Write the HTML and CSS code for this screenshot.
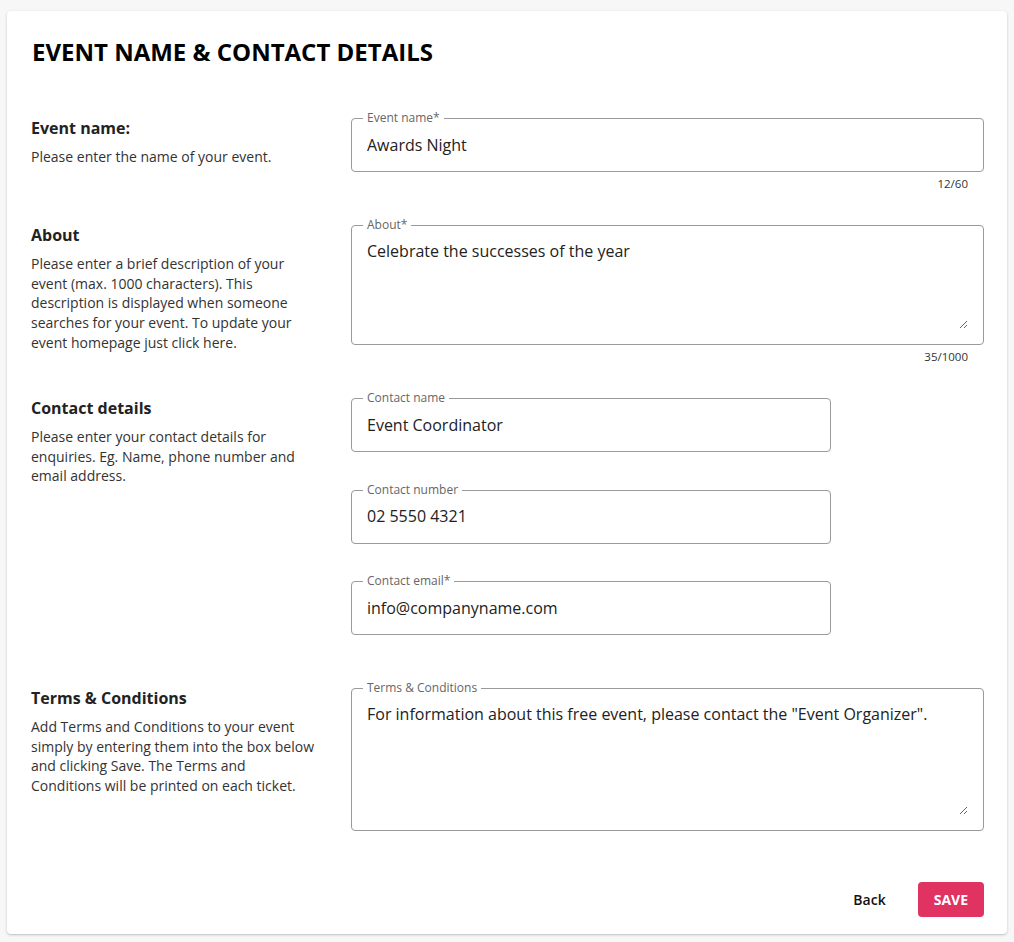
FILE: index.html
```html
<!DOCTYPE html>
<html lang="en">
<head>
<meta charset="utf-8">
<title>Event name &amp; contact details</title>
<link rel="stylesheet" href="styles.css">
</head>
<body>
<main class="card">
  <h1 class="title">EVENT NAME &amp; CONTACT DETAILS</h1>

  <section class="row">
    <div class="info">
      <h2 class="info-title">Event name:</h2>
      <p class="info-text">Please enter the name of your event.</p>
    </div>
    <div class="fields">
      <div class="field-wrap">
        <div class="field">
          <span class="field-label">Event name*</span>
          <input class="field-input" type="text" value="Awards Night">
        </div>
        <div class="helper">12/60</div>
      </div>
    </div>
  </section>

  <section class="row">
    <div class="info">
      <h2 class="info-title">About</h2>
      <p class="info-text">Please enter a brief description of your event (max. 1000 characters). This description is displayed when someone searches for your event. To update your event homepage just click here.</p>
    </div>
    <div class="fields">
      <div class="field-wrap">
        <div class="field field-multi">
          <span class="field-label">About*</span>
          <textarea class="field-area area-about">Celebrate the successes of the year</textarea>
        </div>
        <div class="helper">35/1000</div>
      </div>
    </div>
  </section>

  <section class="row">
    <div class="info">
      <h2 class="info-title">Contact details</h2>
      <p class="info-text">Please enter your contact details for enquiries. Eg. Name, phone number and email address.</p>
    </div>
    <div class="fields fields-narrow">
      <div class="field-wrap">
        <div class="field">
          <span class="field-label">Contact name</span>
          <input class="field-input" type="text" value="Event Coordinator">
        </div>
        <div class="helper"></div>
      </div>
      <div class="field-wrap">
        <div class="field">
          <span class="field-label">Contact number</span>
          <input class="field-input" type="text" value="02 5550 4321">
        </div>
        <div class="helper"></div>
      </div>
      <div class="field-wrap">
        <div class="field">
          <span class="field-label">Contact email*</span>
          <input class="field-input" type="text" value="info@companyname.com">
        </div>
        <div class="helper"></div>
      </div>
    </div>
  </section>

  <section class="row">
    <div class="info">
      <h2 class="info-title">Terms &amp; Conditions</h2>
      <p class="info-text">Add Terms and Conditions to your event simply by entering them into the box below and clicking Save. The Terms and Conditions will be printed on each ticket.</p>
    </div>
    <div class="fields">
      <div class="field-wrap">
        <div class="field field-multi">
          <span class="field-label">Terms &amp; Conditions</span>
          <textarea class="field-area area-terms">For information about this free event, please contact the "Event Organizer".</textarea>
        </div>
        <div class="helper"></div>
      </div>
    </div>
  </section>

  <div class="actions">
    <button class="btn btn-text" type="button">Back</button>
    <button class="btn btn-primary" type="button">SAVE</button>
  </div>
</main>
</body>
</html>
```

FILE: styles.css
```css
* { box-sizing: border-box; }

html, body {
  margin: 0;
  padding: 0;
  background: #f7f7f7;
}

body {
  padding: 11px 7px 8px 7px;
  font-family: "Open Sans", "Noto Sans", Arial, sans-serif;
  color: #222;
}

.card {
  width: 1000px;
  background: #fff;
  border-radius: 4px;
  box-shadow: 0 1px 3px rgba(0, 0, 0, 0.18), 0 1px 1px rgba(0, 0, 0, 0.06);
  padding: 24px 23px 17px 24px;
}

.title {
  margin: 2px 0 0 1px;
  font-size: 24px;
  line-height: 30px;
  font-weight: 700;
  color: #000;
  letter-spacing: 0;
}

.row {
  display: grid;
  grid-template-columns: 286px 1fr;
  column-gap: 34px;
  margin-top: 33px;
}

.row:first-of-type { margin-top: 51px; }

.info-title {
  margin: 0;
  font-size: 16px;
  line-height: 20px;
  font-weight: 700;
  color: #222;
}

.info-text {
  margin: 9px 0 0;
  font-size: 14px;
  line-height: 19.7px;
  color: #333;
}

.fields {
  display: flex;
  flex-direction: column;
  gap: 17.5px;
}

.fields-narrow { width: 480px; }

.field {
  position: relative;
  border: 1px solid #9a9a9a;
  border-radius: 4px;
  background: #fff;
}

.field-label {
  position: absolute;
  top: -8px;
  left: 11px;
  padding: 0 4px;
  background: #fff;
  font-size: 12px;
  line-height: 14px;
  color: #666;
}

.field-input {
  display: block;
  width: 100%;
  height: 52px;
  border: 0;
  outline: none;
  padding: 0 15px 1px;
  background: transparent;
  font-family: inherit;
  font-size: 16px;
  color: #222;
}

.field-multi { padding: 13px 15px 15px 15px; }

.field-area {
  display: block;
  width: 100%;
  border: 0;
  outline: none;
  padding: 0;
  resize: vertical;
  background: transparent;
  font-family: inherit;
  font-size: 16px;
  line-height: 24px;
  color: #222;
}

.area-about { height: 90px; }
.area-terms { height: 113px; }

.helper {
  height: 16px;
  margin-top: 4px;
  padding-right: 16px;
  text-align: right;
  font-size: 11.5px;
  line-height: 16px;
  color: #333;
}

.actions {
  display: flex;
  justify-content: flex-end;
  gap: 16px;
  margin-top: 31px;
}

.btn {
  height: 35px;
  padding: 0 16px;
  border: 0;
  border-radius: 4px;
  font-family: inherit;
  font-size: 14px;
  font-weight: 600;
  cursor: pointer;
}

.btn-text {
  background: transparent;
  color: #111;
}

.btn-primary {
  background: #e03361;
  color: #fff;
  font-weight: 700;
}
```
